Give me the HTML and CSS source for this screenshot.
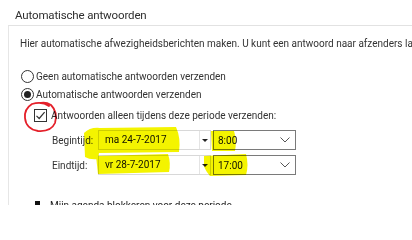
FILE: index.html
```html
<!DOCTYPE html>
<html lang="nl">
<head>
<meta charset="utf-8">
<title>Automatische antwoorden</title>
<link rel="stylesheet" href="styles.css">
</head>
<body>
<div class="page">
  <h1 class="title">Automatische antwoorden</h1>
  <div class="panel">
    <p class="intro">Hier automatische afwezigheidsberichten maken. U kunt een antwoord naar afzenders laten sturen of een bericht instellen.</p>
    <div class="options">
      <div class="opt"><span class="radio"></span>Geen automatische antwoorden verzenden</div>
      <div class="opt"><span class="radio checked"></span>Automatische antwoorden verzenden</div>
      <div class="sub">
        <div class="opt check-row">
          <span class="check"><svg width="11" height="11" viewBox="0 0 11 11"><path d="M1.5 5.8 L4.2 8.5 L9.6 2.2" fill="none" stroke="#333" stroke-width="1.2"/></svg></span>Antwoorden alleen tijdens deze periode verzenden:
        </div>
        <div class="timegrid">
          <span class="lbl">Begintijd:</span>
          <div class="datebox"><span class="dtext">ma 24-7-2017</span><span class="dbtn"><span class="tri"></span></span></div>
          <div class="timebox"><span class="ttext">8:00</span><svg class="chev" width="10" height="6" viewBox="0 0 10 6"><path d="M0.5 0.5 L5 5 L9.5 0.5" fill="none" stroke="#555" stroke-width="1"/></svg></div>
          <span class="lbl">Eindtijd:</span>
          <div class="datebox"><span class="dtext">vr 28-7-2017</span><span class="dbtn"><span class="tri"></span></span></div>
          <div class="timebox"><span class="ttext">17:00</span><svg class="chev" width="10" height="6" viewBox="0 0 10 6"><path d="M0.5 0.5 L5 5 L9.5 0.5" fill="none" stroke="#555" stroke-width="1"/></svg></div>
        </div>
        <div class="opt next-row"><span class="mark"></span>Mijn agenda blokkeren voor deze periode</div>
      </div>
    </div>
  </div>
  <svg class="annot" width="412" height="205" viewBox="0 0 412 205">
    <path d="M84 133 Q90 127 100 128 L176 127 Q181 138 179 152 L99 153 L98 159 Q90 160 85 157 Z" fill="#f4f400"/>
    <path d="M96 156 L168 154 Q171 163 169 172 L98 174 Z" fill="#f4f400"/>
    <path d="M211 131 L234 131 Q237 141 235 151 L212 151 Z" fill="#f4f400"/>
    <path d="M204 156 L246 154 Q249 165 246 175 L210 176 Q205 170 204 166 Z" fill="#f4f400"/>
    <path d="M49 106 Q42 101 32 104 Q24 109 25 118 Q26 129 38 131 Q51 132 55 123 Q58 112 51 105 Q46 102 41 103" fill="none" stroke="#e4202a" stroke-width="1.8" stroke-linecap="round"/>
  </svg>
</div>
</body>
</html>
```

FILE: styles.css
```css
html, body {
  margin: 0;
  padding: 0;
  background: #ffffff;
}

.page {
  position: relative;
  width: 412px;
  height: 205px;
  overflow: hidden;
  font-family: Roboto, "Noto Sans", sans-serif;
  color: #333333;
}

.title {
  margin: 0;
  padding: 6px 0 0 15px;
  height: 19px;
  font-size: 11.5px;
  letter-spacing: -0.15px;
  line-height: 19px;
  font-weight: 400;
  color: #2e2e2e;
}

.panel {
  margin-left: 8px;
  border-top: 1px solid #e2e2e2;
  border-left: 1px solid #e6e6e6;
  padding-left: 11px;
  height: 200px;
}

.intro {
  margin: 10px 0 0 0;
  font-size: 10px;
  line-height: 16px;
  white-space: nowrap;
  overflow: hidden;
}

.options {
  margin-top: 15px;
  font-size: 10px;
}

.opt {
  display: flex;
  align-items: center;
  height: 18px;
  white-space: nowrap;
}

.radio {
  box-sizing: border-box;
  width: 13px;
  height: 13px;
  margin-left: 1px;
  margin-right: 2px;
  border: 1px solid #333333;
  border-radius: 50%;
  display: flex;
  align-items: center;
  justify-content: center;
}

.radio.checked::after {
  content: "";
  width: 7px;
  height: 7px;
  border-radius: 50%;
  background: #222222;
}

.sub {
  padding-left: 14px;
}

.check-row {
  margin-top: 3px;
}

.check {
  box-sizing: border-box;
  width: 13px;
  height: 13px;
  border: 1px solid #333333;
  margin-right: 4px;
  display: flex;
  align-items: center;
  justify-content: center;
}

.timegrid {
  margin-top: 6px;
  padding-left: 18px;
  display: grid;
  grid-template-columns: 44px 113px 83px;
  grid-auto-rows: 20px;
  column-gap: 2px;
  row-gap: 5px;
  align-items: center;
}

.lbl {
  color: #333333;
}

.datebox {
  box-sizing: border-box;
  height: 20px;
  border: 1px solid #d8d8d8;
  display: flex;
  align-items: stretch;
}

.dtext {
  flex: 1;
  padding-left: 6px;
  line-height: 18px;
  color: #111111;
}

.dbtn {
  width: 10px;
  border-left: 1px solid #e4e4e4;
  display: flex;
  align-items: center;
  justify-content: center;
}

.tri {
  width: 0;
  height: 0;
  border-left: 3px solid transparent;
  border-right: 3px solid transparent;
  border-top: 3px solid #222222;
}

.timebox {
  box-sizing: border-box;
  height: 20px;
  border: 1px solid #7a7a7a;
  display: flex;
  align-items: center;
  padding: 0 5px 0 4px;
}

.ttext {
  flex: 1;
  color: #111111;
}

.next-row {
  margin-top: 21px;
  color: #222222;
}

.mark {
  width: 5px;
  height: 8px;
  background: #111111;
  margin-right: 10px;
  margin-left: 1px;
}

.annot {
  position: absolute;
  left: 0;
  top: 0;
  mix-blend-mode: multiply;
  pointer-events: none;
}
```
